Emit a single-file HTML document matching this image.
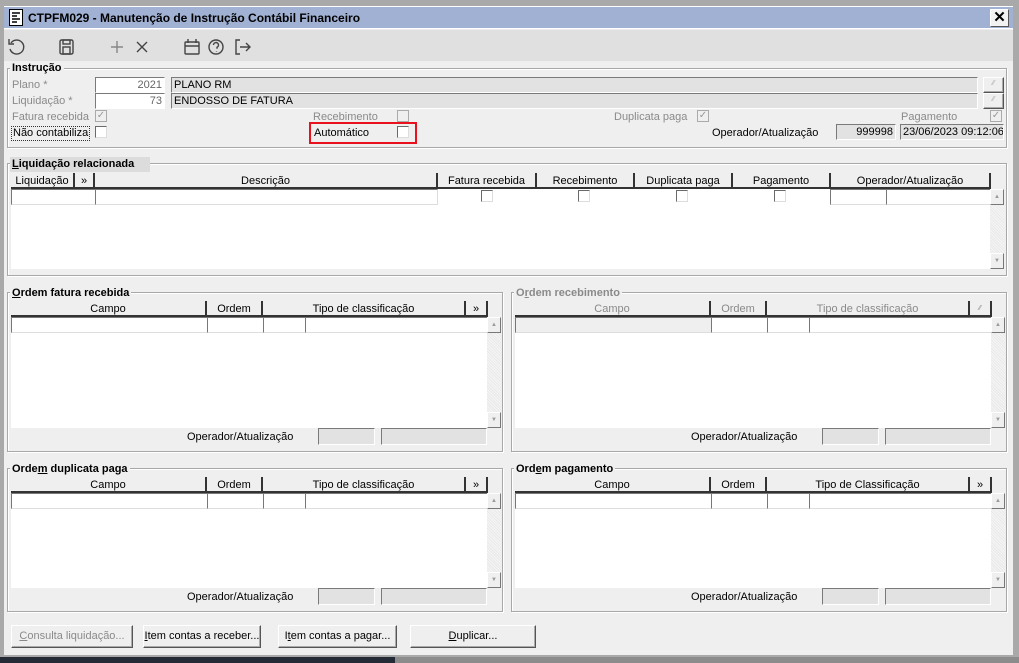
<!DOCTYPE html>
<html><head><meta charset="utf-8"><style>
*{box-sizing:border-box;margin:0;padding:0}
body{width:1019px;height:663px;overflow:hidden;background:#a9a9a9;font-family:"Liberation Sans",sans-serif;font-size:11px;color:#000;position:relative}
.a{position:absolute}
.lbl{position:absolute;white-space:nowrap;line-height:13px;margin-top:1px}
.dis{color:#8a8a8a}
.fs{position:absolute;border:1px solid #a8a8a8;box-shadow:inset 1px 1px 0 #fff,1px 1px 0 #fff}
.lg{position:absolute;font-weight:bold;font-size:11px;background:#efefef;padding:1px 2px 0;line-height:13px;white-space:nowrap}
.inp{position:absolute;background:#fff;border-top:1px solid #7a7a7a;border-left:1px solid #7a7a7a;border-right:1px solid #fff;border-bottom:1px solid #fff;line-height:14px;padding:0 2px;white-space:nowrap;overflow:hidden}
.g{background:#e2e2e2}
.cb{position:absolute;width:12px;height:12px;background:#fff;border-top:1px solid #6a6a6a;border-left:1px solid #6a6a6a;border-right:1px solid #ddd;border-bottom:1px solid #ddd}
.cbd{background:#efefef;border-color:#aaa}
.hd{position:absolute;height:16px;background:#efefef;border-right:2px solid #333;border-bottom:2px solid #333;text-align:center;line-height:16px;white-space:nowrap;overflow:hidden}
.cell{position:absolute;height:16px;background:#fff;border-left:1px solid #777;border-top:1px solid #777;border-bottom:1px solid #ddd}
.white{position:absolute;background:#fff}
.sb{position:absolute;width:14px;background:repeating-linear-gradient(45deg,#e8e8e8 0 1px,#f6f6f6 1px 2px)}
.sbb{position:absolute;width:14px;height:16px;background:#efefef;border:1px solid;border-color:#fff #777 #777 #fff;font-size:6px;color:#999;text-align:center;line-height:14px}
.btn{position:absolute;height:23px;background:#efefef;border:1px solid;border-color:#fff #555 #555 #fff;box-shadow:inset -1px -1px 0 #aaa;text-align:center;line-height:21px;white-space:nowrap}
u{text-decoration:underline}
</style></head><body>
<div class="a" style="left:4px;top:6px;width:1009px;height:649px;background:#efefef;border-top:1px solid #fff"></div>
<div class="a" style="left:4px;top:7px;width:1009px;height:22px;background:#a0b1d3;border-bottom:1px solid #fff"></div>
<div class="a" style="left:4px;top:30px;width:1009px;height:31px;background:#e0e0e0"></div>
<div class="a" style="left:0;top:657px;width:395px;height:6px;background:#242a36"></div>
<div class="a" style="left:395px;top:657px;width:624px;height:6px;background:#8c8c8c"></div>
<svg class="a" style="left:9px;top:9px" width="14" height="17" viewBox="0 0 14 17"><rect x="0.5" y="0.5" width="13" height="16" fill="#fff" stroke="#000"/><path d="M3 4h8M3 7h5M3 10h8M3 13h5" stroke="#000" stroke-width="1.4"/></svg>
<div class="lbl" style="left:28px;top:11px;font-weight:bold;font-size:12px">CTPFM029 - Manutenção de Instrução Contábil Financeiro</div>
<div class="a" style="left:990px;top:9px;width:19px;height:18px;background:#f2f2f2;border:1px solid;border-color:#fff #555 #555 #fff;text-align:center;font-weight:bold;font-size:15px;line-height:15px">✕</div>
<svg class="a" style="left:6px;top:36px" width="250" height="22" viewBox="0 0 250 22" fill="none" stroke="#444" stroke-width="1.4">
<path d="M5 7 A7 7 0 1 1 4 13"/><path d="M3 3v5h5"/>
<rect x="54" y="4" width="13" height="14" rx="1.5"/><rect x="57" y="4" width="7" height="4"/><rect x="57" y="11" width="7" height="7"/>
<path d="M111 5v12M105 11h12" stroke="#888"/><path d="M131 6l10 10M141 6l-10 10"/>
<rect x="179" y="6" width="14" height="12" rx="1"/><path d="M179 10h14M182 3v4M190 3v4"/>
<circle cx="210" cy="11" r="7"/><path d="M207.5 9a2.5 2.5 0 1 1 3.5 2.3v1.5M210.5 15v0.5"/>
<path d="M234 4h-4v14h4M234 11h10M240 7l4 4-4 4"/>
</svg>
<div class="fs" style="left:7px;top:68px;width:1000px;height:80px"></div>
<div class="lg" style="left:10px;top:61px">Instrução</div>
<div class="lbl dis" style="left:12px;top:78px">Plano *</div>
<div class="inp" style="left:95px;top:77px;width:70px;height:16px;text-align:right;color:#666">2021</div>
<div class="inp g" style="left:171px;top:77px;width:807px;height:16px">PLANO RM</div>
<div class="btn" style="left:983px;top:77px;width:21px;height:16px;font-size:7px;color:#aaa;line-height:12px">⁄⁄</div>
<div class="lbl dis" style="left:12px;top:94px">Liquidação *</div>
<div class="inp" style="left:95px;top:93px;width:70px;height:16px;text-align:right;color:#666">73</div>
<div class="inp g" style="left:171px;top:93px;width:807px;height:16px">ENDOSSO DE FATURA</div>
<div class="btn" style="left:983px;top:93px;width:21px;height:16px;font-size:7px;color:#aaa;line-height:12px">⁄⁄</div>
<div class="lbl dis" style="left:12px;top:110px">Fatura recebida</div>
<div class="cb cbd" style="left:95px;top:110px;font-size:10px;line-height:10px;color:#999;text-align:center">✓</div>
<div class="lbl dis" style="left:313px;top:110px">Recebimento</div>
<div class="cb cbd" style="left:397px;top:110px"></div>
<div class="lbl dis" style="left:614px;top:110px">Duplicata paga</div>
<div class="cb cbd" style="left:697px;top:110px;font-size:10px;line-height:10px;color:#999;text-align:center">✓</div>
<div class="lbl dis" style="left:901px;top:110px">Pagamento</div>
<div class="cb cbd" style="left:990px;top:110px;font-size:10px;line-height:10px;color:#999;text-align:center">✓</div>
<div class="lbl" style="left:11px;top:125px;border:1px dotted #333;padding:0 1px">Não contabiliza</div>
<div class="cb" style="left:95px;top:126px"></div>
<div class="a" style="left:309px;top:122px;width:108px;height:22px;border:2px solid #e8121e"></div>
<div class="lbl" style="left:314px;top:126px">Automático</div>
<div class="cb" style="left:397px;top:126px"></div>
<div class="lbl" style="left:712px;top:126px">Operador/Atualização</div>
<div class="inp g" style="left:836px;top:124px;width:60px;height:16px;text-align:right">999998</div>
<div class="inp g" style="left:900px;top:124px;width:104px;height:16px">23/06/2023 09:12:06</div>
<div class="fs" style="left:7px;top:163px;width:1000px;height:113px"></div>
<div class="lg" style="left:10px;top:157px;width:140px;background:#dcdcdc;height:15px"><u>L</u>iquidação relacionada</div>
<div class="white" style="left:11px;top:189px;width:979px;height:80px"></div>
<div class="hd" style="left:11px;top:173px;width:64px">Liquidação</div>
<div class="hd" style="left:75px;top:173px;width:20px">»</div>
<div class="hd" style="left:95px;top:173px;width:343px">Descrição</div>
<div class="hd" style="left:438px;top:173px;width:99px">Fatura recebida</div>
<div class="hd" style="left:537px;top:173px;width:98px">Recebimento</div>
<div class="hd" style="left:635px;top:173px;width:98px">Duplicata paga</div>
<div class="hd" style="left:733px;top:173px;width:98px">Pagamento</div>
<div class="hd" style="left:831px;top:173px;width:160px">Operador/Atualização</div>
<div class="cell" style="left:11px;top:189px;width:84px"></div>
<div class="cell" style="left:95px;top:189px;width:343px;border-right:1px solid #ddd"></div>
<div class="cb" style="left:481px;top:190px"></div>
<div class="cb" style="left:578px;top:190px"></div>
<div class="cb" style="left:676px;top:190px"></div>
<div class="cb" style="left:774px;top:190px"></div>
<div class="cell g" style="left:830px;top:189px;width:56px"></div>
<div class="cell g" style="left:886px;top:189px;width:104px"></div>
<div class="sb" style="left:990px;top:189px;height:80px"></div>
<div class="sbb" style="left:990px;top:189px">▲</div>
<div class="sbb" style="left:990px;top:253px">▼</div>

<div class="fs" style="left:7px;top:292px;width:496px;height:160px"></div>
<div class="lg" style="left:10px;top:286px"><u>O</u>rdem fatura recebida</div>
<div class="white" style="left:11px;top:317px;width:476px;height:111px"></div>
<div class="hd" style="left:11px;top:301px;width:196px">Campo</div>
<div class="hd" style="left:207px;top:301px;width:56px">Ordem</div>
<div class="hd" style="left:263px;top:301px;width:203px">Tipo de classificação</div>
<div class="hd" style="left:466px;top:301px;width:22px">»</div>
<div class="cell" style="left:11px;top:317px;width:196px"></div>
<div class="cell" style="left:207px;top:317px;width:56px"></div>
<div class="cell" style="left:263px;top:317px;width:42px"></div>
<div class="cell" style="left:305px;top:317px;width:182px"></div>
<div class="sb" style="left:487px;top:317px;height:111px"></div>
<div class="sbb" style="left:487px;top:317px">▲</div>
<div class="sbb" style="left:487px;top:412px">▼</div>
<div class="lbl" style="left:187px;top:430px">Operador/Atualização</div>
<div class="inp g" style="left:318px;top:428px;width:57px;height:17px"></div>
<div class="inp g" style="left:381px;top:428px;width:106px;height:17px"></div>

<div class="fs" style="left:511px;top:292px;width:496px;height:160px"></div>
<div class="lg dis" style="left:514px;top:286px">O<u>r</u>dem recebimento</div>
<div class="white" style="left:515px;top:317px;width:476px;height:111px"></div>
<div class="hd dis" style="left:515px;top:301px;width:196px">Campo</div>
<div class="hd dis" style="left:711px;top:301px;width:56px">Ordem</div>
<div class="hd dis" style="left:767px;top:301px;width:203px">Tipo de classificação</div>
<div class="hd dis" style="left:970px;top:301px;width:22px;font-size:7px">⁄⁄</div>
<div class="cell" style="left:515px;top:317px;width:196px;background:#efefef"></div>
<div class="cell" style="left:711px;top:317px;width:56px"></div>
<div class="cell" style="left:767px;top:317px;width:42px"></div>
<div class="cell" style="left:809px;top:317px;width:182px"></div>
<div class="sb" style="left:991px;top:317px;height:111px"></div>
<div class="sbb" style="left:991px;top:317px">▲</div>
<div class="sbb" style="left:991px;top:412px">▼</div>
<div class="lbl" style="left:691px;top:430px">Operador/Atualização</div>
<div class="inp g" style="left:822px;top:428px;width:57px;height:17px"></div>
<div class="inp g" style="left:885px;top:428px;width:106px;height:17px"></div>

<div class="fs" style="left:7px;top:468px;width:496px;height:144px"></div>
<div class="lg" style="left:10px;top:462px">Orde<u>m</u> duplicata paga</div>
<div class="white" style="left:11px;top:493px;width:476px;height:95px"></div>
<div class="hd" style="left:11px;top:477px;width:196px">Campo</div>
<div class="hd" style="left:207px;top:477px;width:56px">Ordem</div>
<div class="hd" style="left:263px;top:477px;width:203px">Tipo de classificação</div>
<div class="hd" style="left:466px;top:477px;width:22px">»</div>
<div class="cell" style="left:11px;top:493px;width:196px"></div>
<div class="cell" style="left:207px;top:493px;width:56px"></div>
<div class="cell" style="left:263px;top:493px;width:42px"></div>
<div class="cell" style="left:305px;top:493px;width:182px"></div>
<div class="sb" style="left:487px;top:493px;height:95px"></div>
<div class="sbb" style="left:487px;top:493px">▲</div>
<div class="sbb" style="left:487px;top:572px">▼</div>
<div class="lbl" style="left:187px;top:590px">Operador/Atualização</div>
<div class="inp g" style="left:318px;top:588px;width:57px;height:17px"></div>
<div class="inp g" style="left:381px;top:588px;width:106px;height:17px"></div>

<div class="fs" style="left:511px;top:468px;width:496px;height:144px"></div>
<div class="lg" style="left:514px;top:462px">Ord<u>e</u>m pagamento</div>
<div class="white" style="left:515px;top:493px;width:476px;height:95px"></div>
<div class="hd" style="left:515px;top:477px;width:196px">Campo</div>
<div class="hd" style="left:711px;top:477px;width:56px">Ordem</div>
<div class="hd" style="left:767px;top:477px;width:203px">Tipo de Classificação</div>
<div class="hd" style="left:970px;top:477px;width:22px">»</div>
<div class="cell" style="left:515px;top:493px;width:196px"></div>
<div class="cell" style="left:711px;top:493px;width:56px"></div>
<div class="cell" style="left:767px;top:493px;width:42px"></div>
<div class="cell" style="left:809px;top:493px;width:182px"></div>
<div class="sb" style="left:991px;top:493px;height:95px"></div>
<div class="sbb" style="left:991px;top:493px">▲</div>
<div class="sbb" style="left:991px;top:572px">▼</div>
<div class="lbl" style="left:691px;top:590px">Operador/Atualização</div>
<div class="inp g" style="left:822px;top:588px;width:57px;height:17px"></div>
<div class="inp g" style="left:885px;top:588px;width:106px;height:17px"></div>

<div class="btn dis" style="left:11px;top:625px;width:122px"><u>C</u>onsulta liquidação...</div>
<div class="btn" style="left:143px;top:625px;width:118px"><u>I</u>tem contas a receber...</div>
<div class="btn" style="left:278px;top:625px;width:119px">I<u>t</u>em contas a pagar...</div>
<div class="btn" style="left:410px;top:625px;width:126px"><u>D</u>uplicar...</div>
</body></html>
